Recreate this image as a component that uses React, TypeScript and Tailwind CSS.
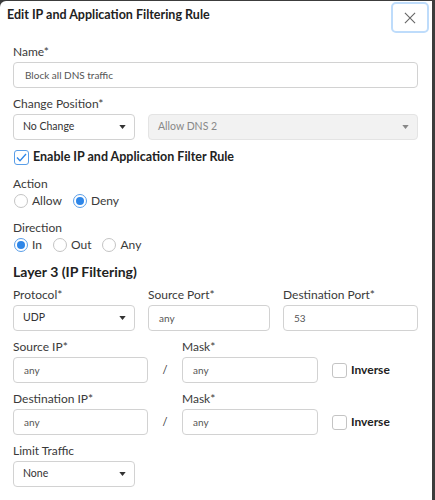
import React from 'react';

const Caret = ({ light }: { light?: boolean }) => (
  <svg width="7" height="4" viewBox="0 0 8 5" className={light ? 'text-[#888]' : 'text-[#333]'}>
    <path d="M0 0h8L4 5z" fill="currentColor" />
  </svg>
);

const Label = ({ children }: { children: React.ReactNode }) => (
  <div className="h-[14px] leading-[14px] text-[12px] text-[#3a3a3a] mb-[3px] whitespace-nowrap">{children}</div>
);

const Input = ({ value, className = '' }: { value: string; className?: string }) => (
  <div className={`h-[26px] border border-[#d2d2d2] rounded-[4px] flex items-center pl-[10px] text-[10px] text-[#555] ${className}`}>
    {value}
  </div>
);

const Select = ({ value, className = '', disabled }: { value: string; className?: string; disabled?: boolean }) => (
  <div
    className={`h-[26px] border rounded-[4px] flex items-center justify-between pl-[9px] pr-[8px] text-[10.5px] ${
      disabled ? 'bg-[#f2f2f2] border-[#e4e4e4] text-[#888]' : 'border-[#d2d2d2] text-[#333]'
    } ${className}`}
  >
    <span>{value}</span>
    <Caret light={disabled} />
  </div>
);

const Radio = ({ label, checked }: { label: string; checked?: boolean }) => (
  <div className="flex items-center gap-[4px] mr-[11px] h-[14px]">
    <span
      className={`w-[14px] h-[14px] rounded-full border flex items-center justify-center ${
        checked ? 'border-[#5a9ee8]' : 'border-[#c4c4c4]'
      }`}
    >
      {checked && <span className="w-[8px] h-[8px] rounded-full bg-[#2e86e8]" />}
    </span>
    <span className="text-[12px] text-[#3a3a3a]">{label}</span>
  </div>
);

const Checkbox = ({ checked }: { checked?: boolean }) => (
  <span
    className={`w-[15px] h-[15px] rounded-[3px] border flex items-center justify-center ${
      checked ? 'border-[#5a9ee8]' : 'border-[#c4c4c4]'
    }`}
  >
    {checked && (
      <svg width="11" height="9" viewBox="0 0 11 9">
        <path d="M1 4.5l3 3.2L10 1" fill="none" stroke="#2e86e8" strokeWidth="1.3" />
      </svg>
    )}
  </span>
);

const IpRow = ({ label }: { label: string }) => (
  <div className="flex items-end mt-[9px]">
    <div className="w-[135px]">
      <Label>{label}</Label>
      <Input value="any" />
    </div>
    <div className="w-[34px] h-[26px] flex items-center justify-center text-[11px] text-[#333]">/</div>
    <div className="w-[136px]">
      <Label>Mask*</Label>
      <Input value="any" />
    </div>
    <div className="h-[26px] flex items-center gap-[4px] ml-[14px]">
      <Checkbox />
      <span className="text-[12px] font-bold text-[#222]">Inverse</span>
    </div>
  </div>
);

export default function App() {
  return (
    <div className="w-[435px] h-[500px] bg-[#3c3c3c] overflow-hidden" style={{ fontFamily: 'Lato, "Open Sans", sans-serif' }}>
      <div className="w-[432px] h-[502px] mt-[1px] bg-white rounded-tl-[6px]">
        <div className="flex items-start justify-between pl-[7px] pt-[1px]">
          <h1 className="text-[12.5px] leading-[16px] mt-[5px] font-bold text-[#222]">Edit IP and Application Filtering Rule</h1>
          <button className="w-[38px] h-[31px] mr-[3px] border-2 border-[#bedcfb] rounded-[5px] flex items-center justify-center">
            <svg width="12" height="12" viewBox="0 0 13 13">
              <path d="M1 1l11 11M12 1L1 12" stroke="#666" strokeWidth="1.2" />
            </svg>
          </button>
        </div>

        <div className="pl-[13px] pr-[14px] mt-[12px]">
          <Label>Name*</Label>
          <Input value="Block all DNS traffic" className="w-[405px] pl-[11px] text-[#444]" />

          <div className="mt-[9px]">
            <Label>Change Position*</Label>
            <div className="flex gap-[13px]">
              <Select value="No Change" className="w-[122px]" />
              <Select value="Allow DNS 2" className="w-[270px]" disabled />
            </div>
          </div>

          <div className="flex items-center gap-[4px] mt-[9px] ml-[1px] h-[16px]">
            <Checkbox checked />
            <span className="text-[12.5px] font-bold text-[#222]">Enable IP and Application Filter Rule</span>
          </div>

          <div className="mt-[12px]">
            <Label>Action</Label>
            <div className="flex ml-[1px]">
              <Radio label="Allow" />
              <Radio label="Deny" checked />
            </div>
          </div>

          <div className="mt-[13px]">
            <Label>Direction</Label>
            <div className="flex ml-[1px]">
              <Radio label="In" checked />
              <Radio label="Out" />
              <Radio label="Any" />
            </div>
          </div>

          <h2 className="text-[14px] leading-[16px] font-bold text-[#222] mt-[12px]">Layer 3 (IP Filtering)</h2>

          <div className="grid grid-cols-[122px_122px_135px] gap-x-[13px] mt-[8px]">
            <div>
              <Label>Protocol*</Label>
              <Select value="UDP" />
            </div>
            <div>
              <Label>Source Port*</Label>
              <Input value="any" />
            </div>
            <div>
              <Label>Destination Port*</Label>
              <Input value="53" />
            </div>
          </div>

          <IpRow label="Source IP*" />
          <IpRow label="Destination IP*" />

          <div className="mt-[9px]">
            <Label>Limit Traffic</Label>
            <Select value="None" className="w-[122px]" />
          </div>
        </div>
      </div>
    </div>
  );
}
